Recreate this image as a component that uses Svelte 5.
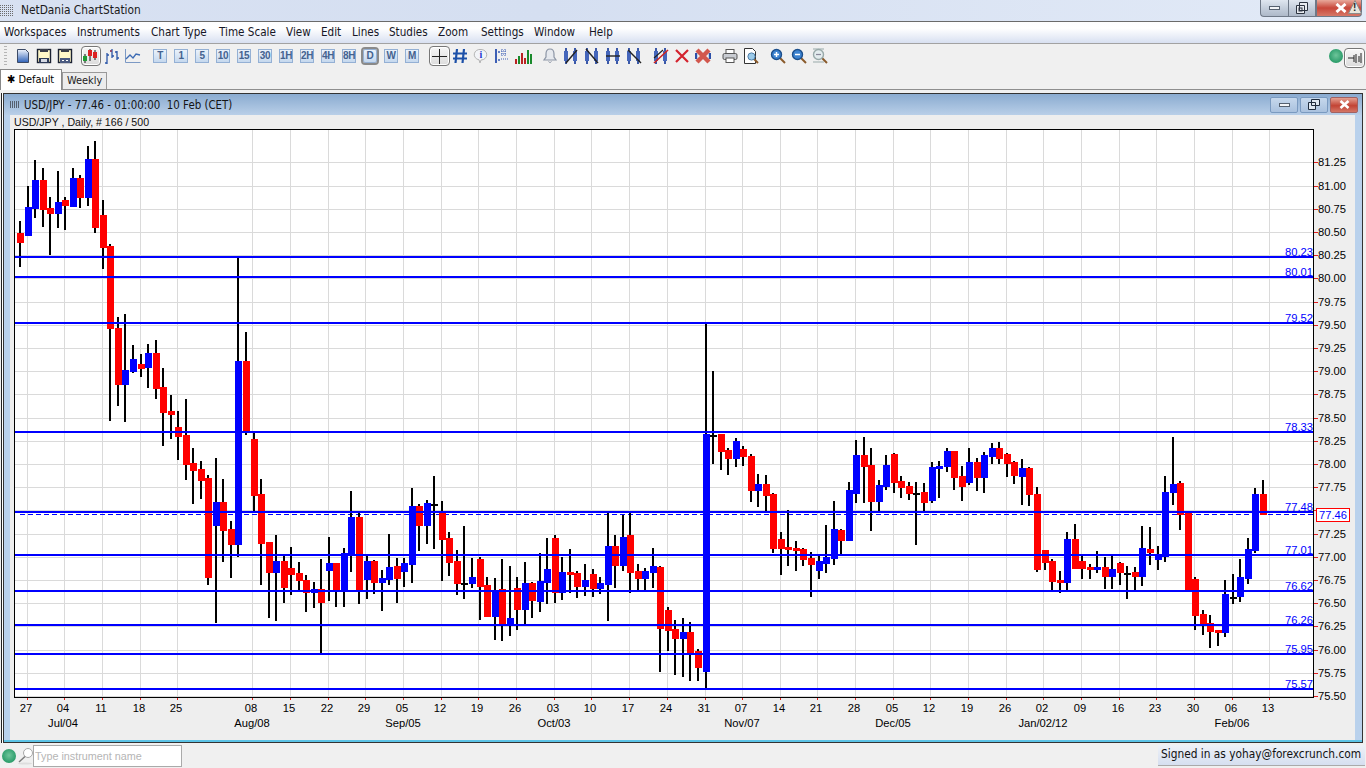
<script>
  const menu = [['Workspaces',4],['Instruments',77],['Chart Type',151],['Time Scale',219],['View',286],['Edit',321],['Lines',352],['Studies',389],['Zoom',438],['Settings',481],['Window',534],['Help',589]];
  const times = ['T','1','5','10','15','30','1H','2H','4H','8H','D','W','M'];
  // wick top, wick bottom, body top, body bottom, type (r red, b blue, d doji)
  const data = [
    [221,267,233,243,'r'],[186,236,207,236,'b'],[160,218,180,209,'b'],[168,227,180,210,'r'],[197,255,208,214,'r'],
    [171,228,202,214,'b'],[197,230,200,206,'r'],[168,207,178,207,'b'],[175,208,178,198,'r'],[146,206,159,198,'b'],
    [141,233,159,228,'r'],[200,269,215,248,'r'],[244,421,246,329,'r'],[317,406,328,385,'r'],[314,422,370,385,'b'],
    [345,373,359,372,'b'],[354,377,364,369,'r'],[344,388,353,368,'b'],[340,399,353,389,'r'],[368,446,387,413,'r'],
    [395,439,411,415,'r'],[411,460,427,437,'r'],[399,480,435,465,'r'],[448,504,463,471,'r'],[461,499,469,481,'r'],
    [475,585,478,578,'r'],[458,623,502,526,'b'],[479,562,502,531,'r'],[521,578,529,545,'r'],[257,557,361,545,'b'],
    [332,435,361,432,'r'],[432,511,439,496,'r'],[479,585,494,544,'r'],[542,618,542,573,'r'],[535,621,561,573,'b'],
    [556,603,561,588,'r'],[547,595,568,575,'r'],[562,591,573,581,'r'],[575,612,580,593,'r'],[582,608,589,593,'b'],
    [559,653,589,603,'r'],[537,601,563,571,'b'],[563,607,563,591,'r'],[548,607,553,591,'b'],[491,572,517,555,'b'],
    [513,604,517,590,'r'],[556,599,561,580,'b'],[560,594,561,583,'r'],[570,611,578,583,'b'],[534,585,567,580,'b'],
    [558,603,566,579,'r'],[558,587,563,572,'b'],[488,583,506,565,'b'],[504,551,506,526,'r'],[500,544,503,526,'b'],
    [476,549,504,504,'d'],[501,581,512,540,'r'],[532,576,538,563,'r'],[550,595,561,584,'r'],[526,599,583,583,'d'],
    [558,588,577,584,'b'],[557,620,559,587,'r'],[577,617,585,617,'r'],[578,640,590,617,'b'],[559,641,589,624,'r'],
    [566,636,618,625,'b'],[577,630,588,610,'r'],[562,625,583,610,'b'],[582,618,583,601,'r'],[553,612,581,602,'b'],
    [538,604,569,583,'b'],[535,603,538,593,'r'],[557,600,572,593,'b'],[549,593,572,575,'r'],[571,598,573,587,'r'],
    [564,596,580,587,'b'],[569,597,574,589,'r'],[577,594,583,589,'b'],[513,621,546,585,'b'],[535,588,546,566,'r'],
    [515,571,537,566,'b'],[513,593,535,573,'r'],[564,590,571,579,'r'],[568,590,571,579,'b'],[548,588,566,573,'b'],
    [566,672,567,629,'r'],[607,651,610,631,'r'],[620,675,629,639,'r'],[618,677,632,639,'b'],[622,681,632,653,'r'],
    [649,681,651,668,'r'],[324,688,434,672,'b'],
    [371,464,435,435,'d'],[434,470,434,452,'r'],[448,475,450,459,'r'],[438,467,441,459,'b'],[446,466,449,457,'r'],
    [454,502,456,491,'r'],[474,507,484,491,'b'],[475,511,484,496,'r'],[493,553,494,549,'r'],[532,575,539,549,'r'],
    [510,566,547,550,'r'],[541,571,548,551,'r'],[548,566,549,560,'r'],[552,597,558,565,'r'],[555,579,561,571,'b'],
    [525,573,557,564,'b'],[501,565,529,559,'b'],[529,554,530,541,'r'],[482,541,490,541,'b'],[440,503,455,494,'b'],
    [437,503,455,467,'r'],[448,531,465,502,'r'],[480,511,485,502,'b'],[455,490,465,487,'b'],[453,493,454,483,'r'],
    [476,498,481,488,'r'],[482,500,486,494,'r'],[482,545,493,493,'d'],[483,511,492,503,'r'],[462,503,467,501,'b'],
    [461,498,466,469,'b'],[448,472,451,467,'b'],[451,490,451,478,'r'],[466,501,476,487,'r'],[448,485,462,483,'b'],
    [458,491,462,478,'r'],[452,493,455,478,'b'],[443,464,448,457,'b'],[442,464,448,459,'r'],[453,477,454,464,'r'],
    [461,484,462,476,'r'],
    [459,505,468,477,'b'],[467,506,468,495,'r'],[487,572,494,570,'r'],[550,570,550,563,'r'],[559,590,561,582,'r'],
    [571,593,580,583,'r'],[532,590,539,583,'b'],[524,569,539,569,'r'],[556,579,561,569,'r'],[564,579,567,570,'r'],
    [551,573,567,570,'b'],[557,589,567,577,'r'],[556,589,569,577,'b'],[562,585,563,573,'r'],[566,599,573,573,'d'],
    [567,590,572,577,'r'],[526,586,548,577,'b'],[527,565,549,553,'r'],[546,570,554,560,'b'],[476,562,492,557,'b'],
    [437,505,484,493,'b'],[481,530,483,515,'r'],[513,590,513,590,'r'],[577,630,579,616,'r'],[610,635,614,624,'r'],
    [615,648,623,632,'r'],[630,646,630,633,'r'],[580,637,594,633,'b'],[574,604,597,597,'d'],[559,602,577,597,'b'],
    [538,584,549,579,'b'],[488,553,494,551,'b'],[480,515,494,515,'r']
  ];
  const candles = data.map((d, i) => {
    const x = Math.round(17 + 7.5333 * i);
    return { x, wt: d[0], wb: d[1], bt: d[2], bb: d[3], t: d[4] };
  });
  const gridX = [27,64,102,140,177,252,290,328,365,403,441,478,516,554,591,629,667,705,742,780,817,855,893,930,968,1006,1043,1081,1119,1156,1194,1232,1269];
  const dates = ['27','04','11','18','25','08','15','22','29','05','12','19','26','03','10','17','24','31','07','14','21','28','05','12','19','26','02','09','16','23','30','06','13'];
  const months = [['Jul/04',63],['Aug/08',252],['Sep/05',403],['Oct/03',554],['Nov/07',742],['Dec/05',893],['Jan/02/12',1043],['Feb/06',1232]];
  const prices = Array.from({ length: 24 }, (_, k) => {
    const v = 81.25 - 0.25 * k;
    return { y: Math.round(162.3 + 23.2 * k), label: v.toFixed(2), v };
  });
  const lines = [[257,'80.23'],[277,'80.01'],[323,'79.52'],[432,'78.33'],[512,'77.48'],[555,'77.01'],[591,'76.62'],[625,'76.26'],[654,'75.95'],[689,'75.57']];
  const trendIcons = [[3,15,14,2],[2,1,14,15],[1,8,15,8],[2,2,15,15]];
</script>

{#snippet bars()}
  <rect x="2" y="0" width="2" height="16" fill="#3a58a8" />
  <rect x="1" y="3" width="4" height="10" fill="#4566bb" />
  <rect x="11" y="0" width="2" height="16" fill="#3a58a8" />
  <rect x="10" y="3" width="4" height="10" fill="#4566bb" />
{/snippet}

{#snippet lens(sign, colour)}
  <line x1="10" y1="10" x2="15" y2="15" stroke="#8a5a2b" stroke-width="2" />
  <circle cx="6.5" cy="6.5" r="5" fill={colour} stroke={sign === 'f' ? '#9aa' : '#1c4f8c'} stroke-width="1.4" />
  {#if sign === '+'}
    <path d="M4 6.5h5M6.5 4v5" stroke="#fff" stroke-width="1.5" fill="none" />
  {:else if sign === '-'}
    <path d="M4 6.5h5" stroke="#fff" stroke-width="1.5" fill="none" />
  {:else}
    <path d="M1 1h11M1 14h11" stroke="#9aa" stroke-width="1" fill="none" />
    <path d="M4 6.5h5" stroke="#889" stroke-width="1.2" fill="none" />
  {/if}
{/snippet}

<div class="app">
  <header class="title">
    <svg class="grip-title" width="16" height="12" viewBox="0 0 16 12">
      <pattern id="dots" width="2" height="2" patternUnits="userSpaceOnUse"><rect width="1" height="1" fill="#6b6b6b" /></pattern>
      <rect width="14" height="12" fill="url(#dots)" />
    </svg>
    <span class="title-text">NetDania ChartStation</span>
    <div class="wbtns">
      <button class="wb min"><i class="dash"></i></button>
      <button class="wb res">
        <svg width="12" height="12" viewBox="0 0 12 12"><path d="M3.5.5h8v8h-8zM.5 3.5h8v8h-8z" fill="#e8ebf0" stroke="#2b3340" /><rect x="3" y="6" width="3" height="3" fill="none" stroke="#2b3340" /></svg>
      </button>
      <button class="wb close">
        <svg width="12" height="10" viewBox="0 0 12 10"><path d="M1.5 1l9 8M10.5 1l-9 8" stroke="#fff" stroke-width="3" /></svg>
      </button>
      <span class="warn"><svg width="14" height="14" viewBox="0 0 14 14"><path d="M7 .5L13.5 13.5H.5z" fill="#e9e6dc" stroke="#8c8c8c" /></svg><b>!</b></span>
    </div>
  </header>

  <nav class="menu">
    {#each menu as m}<span class="mi" style="left:{m[1]}px">{m[0]}</span>{/each}
  </nav>

  <div class="toolbar">
    <span class="grip"></span>
    <div class="g g1">
      <svg class="ic" viewBox="0 0 16 16"><defs><linearGradient id="doc" x1="0" y1="0" x2="0" y2="1"><stop offset="0" stop-color="#eef3fb" /><stop offset="1" stop-color="#2f62b8" /></linearGradient></defs><path d="M2.5 1.5h8l3 3v10h-11z" fill="url(#doc)" stroke="#3b4a66" /></svg>
      <svg class="ic" viewBox="0 0 16 16"><rect x="1.5" y="1.5" width="13" height="13" fill="#fff8c8" stroke="#1b2233" stroke-width="1.4" /><rect x="4" y="1" width="8" height="3" fill="#3b3f4a" /><rect x="3" y="10" width="10" height="5" fill="#2d3a58" /><rect x="5" y="11" width="6" height="3" fill="#d5d9e3" /></svg>
      <svg class="ic" viewBox="0 0 16 16"><rect x="1.5" y="1.5" width="13" height="13" fill="#fff8c8" stroke="#1b2233" stroke-width="1.4" /><rect x="4" y="1" width="8" height="3" fill="#3b3f4a" /><rect x="3" y="10" width="10" height="5" fill="#4a5a80" /><path d="M5 12.5h2M9 12.5h2" stroke="#fff" /></svg>
    </div>
    <div class="g g2">
      <span class="sel candle">
        <svg width="18" height="16" viewBox="0 0 18 16">
          <path d="M3 6v9M8 1v12M13 2v10" stroke="#111" />
          <rect x="1" y="8" width="4" height="5" fill="#1f9b35" />
          <rect x="6" y="2" width="4" height="6" fill="#d22" />
          <rect x="11" y="4" width="4" height="6" fill="#d22" />
        </svg>
      </span>
      <svg class="ic" viewBox="0 0 16 16"><path d="M3 5v11M1 15h2M3 7h2M8 1v9M6 3h2M8 8h2M13 3v9M11 4h2M13 10h2" stroke="#2a55a8" stroke-width="1.3" fill="none" /><path d="M6 3h2" stroke="#c33" /></svg>
      <svg class="ic" viewBox="0 0 16 16"><path d="M.5 1v13.5h15" stroke="#7c99c4" fill="none" /><path d="M1 11l4-4 3 3 3-4 4 1" stroke="#3e6cb4" stroke-width="1.3" fill="none" /></svg>
    </div>
    <div class="g g3">
      {#each times as t}<span class="tb" class:on={t === 'D'}>{t}</span>{/each}
    </div>
    <div class="g g4">
      <span class="sel cross"><svg width="15" height="15" viewBox="0 0 15 15"><path d="M0 7.5h15M7.5 0v15" stroke="#222" /></svg></span>
      <svg class="ic" viewBox="0 0 16 16"><path d="M5 1L3.5 15M12 1l-1.5 14M1 5.5h14M1 10.5h14" stroke="#1c50a8" stroke-width="2.2" fill="none" /></svg>
    </div>
    <div class="g g5">
      <svg class="ic" viewBox="0 0 16 16"><path d="M8 1.5a5.5 5 0 0 1 0 10.5l-1 3-1-3.2A5.5 5 0 0 1 8 1.5z" fill="#f2f4f8" stroke="#b4b4b4" /><text x="8" y="10" class="itxt">i</text></svg>
      <svg class="ic" viewBox="0 0 16 16"><rect x="1" y="1" width="2" height="14" fill="#3d5fb5" /><path d="M4 12h2M4 4h2" stroke="#3d5fb5" stroke-width="1.5" /><path d="M8 1v7M11 1v7M7 3h6M7 6h6M7 11h8" stroke="#3d5fb5" stroke-dasharray="1 1" /></svg>
      <svg class="ic wide" viewBox="0 0 18 16">
        <rect x="0" y="11" width="2" height="5" fill="#b22" /><rect x="3" y="8" width="2" height="8" fill="#1a8a2c" /><rect x="6" y="5" width="2" height="11" fill="#b22" /><rect x="9" y="10" width="2" height="6" fill="#b22" /><rect x="12" y="2" width="2" height="14" fill="#1a8a2c" /><rect x="15" y="6" width="2" height="10" fill="#1a8a2c" />
      </svg>
    </div>
    <div class="g g6">
      <svg class="ic" viewBox="0 0 16 16"><path d="M8 1c3 0 4 2 4 5v3l2 3H2l2-3V6c0-3 1-5 4-5z" fill="#e6e9ee" stroke="#8c95a5" stroke-width="1.2" /><path d="M6.5 13.5a1.7 1.7 0 0 0 3 0" fill="none" stroke="#8c95a5" /></svg>
    </div>
    <div class="g g7">
      {#each trendIcons as l}
        <svg class="ic" viewBox="0 0 16 16">
          {@render bars()}
          <line x1={l[0]} y1={l[1]} x2={l[2]} y2={l[3]} stroke="#222" stroke-width="1.4" />
        </svg>
      {/each}
    </div>
    <div class="g g8">
      <svg class="ic" viewBox="0 0 16 16">{@render bars()}<line x1="1" y1="15" x2="15" y2="2" stroke="#c22" stroke-width="1.6" /><line x1="1" y1="10" x2="10" y2="2" stroke="#222" stroke-width="1.2" /></svg>
      <svg class="ic" viewBox="0 0 16 16"><path d="M2 2l12 12M14 2L2 14" stroke="#d4232e" stroke-width="2.2" /></svg>
      <svg class="ic" viewBox="0 0 16 16"><path d="M2 2l12 12M14 2L2 14" stroke="#d2574d" stroke-width="4.4" /><path d="M1 5v6M15 5v6" stroke="#2d50a8" stroke-width="2.4" /></svg>
    </div>
    <div class="g g9">
      <svg class="ic" viewBox="0 0 16 16"><rect x="4" y="1.5" width="8" height="4" fill="#fff" stroke="#555" /><rect x="1" y="5.5" width="14" height="6" rx="1.5" fill="#c9ccd2" stroke="#555" /><rect x="4" y="10" width="8" height="4.5" fill="#fff" stroke="#555" /></svg>
      <svg class="ic" viewBox="0 0 16 16"><path d="M1.5 .5h8l3 3v12h-11z" fill="#fff" stroke="#333" /><line x1="10" y1="10" x2="15" y2="15" stroke="#8a5a2b" stroke-width="2" /><circle cx="8.5" cy="8.5" r="3.6" fill="#9ccbea" stroke="#4d7da8" /></svg>
    </div>
    <div class="g g10">
      <svg class="ic" viewBox="0 0 16 16">{@render lens('+', '#3d83d0')}</svg>
      <svg class="ic" viewBox="0 0 16 16">{@render lens('-', '#3d83d0')}</svg>
      <svg class="ic" viewBox="0 0 16 16">{@render lens('f', '#e3ecee')}</svg>
    </div>
    <div class="tool-right">
      <span class="led"></span>
      <span class="sel pin"><svg width="14" height="14" viewBox="0 0 14 14"><path d="M0 7h6M8 3v9M11 5v6M6 4v7M13 2v10" stroke="#222" fill="none" /></svg></span>
    </div>
  </div>

  <div class="tabs">
    <span class="tab active"><span class="star">✱</span> Default</span>
    <span class="tab">Weekly</span>
  </div>

  <section class="win">
    <div class="win-head">
      <span class="win-grip"></span>
      <span class="win-title">USD/JPY - 77.46 - 01:00:00 &nbsp;10 Feb (CET)</span>
      <div class="win-btns">
        <button class="ib"><i class="dash"></i></button>
        <button class="ib">
          <svg width="12" height="11" viewBox="0 0 12 11"><path d="M3.5.5h8v6h-8zM.5 3.5h7v7h-7z" fill="#dfe8f2" stroke="#1f2c3d" /></svg>
        </button>
        <button class="ib red">
          <svg width="11" height="9" viewBox="0 0 11 9"><path d="M1.5 1l8 7M9.5 1l-8 7" stroke="#fff" stroke-width="2.6" /></svg>
        </button>
      </div>
    </div>
    <div class="win-body">
      <div class="strip left"></div>
      <div class="chart">
        <div class="cap">USD/JPY , Daily, # 166 / 500</div>
        <svg class="plot" width="1341" height="609" viewBox="14 129 1341 609" shape-rendering="crispEdges">
          <rect class="bg" x="15" y="130" width="1298" height="567" />
          {#each gridX as x}<rect class="gr" x={x} y="130" width="1" height="567" />{/each}
          {#each prices as p}<rect class="gr" x="15" y={p.y} width="1298" height="1" />{/each}
          <line class="dash-line" x1="20" x2="1313" y1="514.5" y2="514.5" />
          {#each candles as c}
            <rect class="wick" x={c.x + 2} y={c.wt} width="2" height={c.wb - c.wt} />
            {#if c.t === 'd'}
              <rect class="wick" x={c.x} y={c.bt} width="7" height="2" />
            {:else}
              <rect class={c.t} x={c.x} y={c.bt} width="7" height={Math.max(c.bb - c.bt, 2)} />
            {/if}
          {/each}
          {#each lines as l}
            <rect class="b" x="15" y={l[0] - 1} width="1298" height="2" />
          {/each}
          <rect class="frame" x="14.5" y="129.5" width="1299" height="568" />
          {#each gridX as x}<rect class="tick" x={x} y="698" width="1" height="2" />{/each}
          {#each prices as p}
            <rect class="tick" x="1314" y={p.y} width="4" height="1" />
            {#if p.label !== '77.50'}
              <text class="ax" x="1318" y={p.y + 4}>{p.label}</text>
            {/if}
          {/each}
          {#each lines as l}
            <text class="lbl" x="1313" y={l[0] - 1}>{l[1]}</text>
          {/each}
          <rect class="curb" x="1316" y="508" width="34" height="14" />
          <rect class="bg" x="1317" y="509" width="32" height="12" />
          <text class="curt" x="1319" y="519">77.46</text>
          {#each gridX as x, i}
            <text class="dt" x={x - 1} y="712">{dates[i]}</text>
          {/each}
          {#each months as m}
            <text class="dt" x={m[1]} y="727">{m[0]}</text>
          {/each}
        </svg>
      </div>
      <div class="strip right"></div>
    </div>
  </section>

  <footer class="status">
    <span class="led low"></span>
    <svg class="find" width="16" height="18" viewBox="0 0 16 18"><circle cx="10" cy="6" r="4.5" fill="#fff" stroke="#a8a8a8" /><path d="M7 9.5L1 15" stroke="#7c7c7c" stroke-width="1.5" /><ellipse cx="7" cy="16.5" rx="7" ry="1" fill="#ddd" /></svg>
    <input class="inst" placeholder="Type instrument name" />
    <span class="signed">Signed in as yohay@forexcrunch.com</span>
  </footer>
</div>

<style>
  :global(body) { margin: 0; background: #f0f0f0; overflow: hidden; }
  .app { --ui: "DejaVu Sans Condensed", "Noto Sans", sans-serif; width: 1366px; height: 768px; display: flex; flex-direction: column; background: #f0f0f0; font-family: "Liberation Sans", Arial, sans-serif; color: #111; overflow: hidden; }

  .title { height: 21px; display: flex; align-items: center; position: relative; background: linear-gradient(90deg, #d8e1f2, #d5dff1 40%, #e2eaf7); flex: none; }
  .grip-title { margin-left: 0; margin-right: 5px; }
  .title-text { font-size: 11.8px; font-family: var(--ui); color: #1a1a1a; margin-top: -1px; }
  .wbtns { position: absolute; top: 0; left: 1260px; display: flex; height: 17px; }
  .wb { width: 28px; height: 17px; border: 1px solid #6f7988; border-top: 0; padding: 0; display: flex; align-items: center; justify-content: center; background: linear-gradient(#dfe6f0, #c2ccda 55%, #aeb9c9); }
  .wb.min { border-radius: 0 0 0 4px; border-right: 0; }
  .wb.close { width: 46px; border-radius: 0 0 4px 0; background: linear-gradient(#e8a99b, #c8473a 50%, #d67868); justify-content: flex-start; padding-left: 18px; }
  .dash { display: block; width: 11px; height: 4px; background: #f2f4f7; border: 1px solid #55606f; box-sizing: border-box; }
  .warn { position: absolute; right: 0; top: 0; width: 14px; height: 14px; }
  .warn svg { display: block; }
  .warn b { position: absolute; left: 5px; top: 2px; font-size: 10px; line-height: 12px; color: #222; }

  .menu { height: 21px; flex: none; position: relative; box-sizing: content-box; border-top: 1px solid #6a6a6a; border-bottom: 1px solid #a2a2a2; background: linear-gradient(#fdfdfe, #fff 30%, #d8e0f1); }
  .mi { position: absolute; top: 2px; font-size: 11.6px; font-family: var(--ui); line-height: 16px; color: #161626; white-space: nowrap; }

  .toolbar { height: 24px; flex: none; display: flex; align-items: center; padding-left: 4px; box-sizing: border-box; background: #f0f0f0; }
  .grip { width: 3px; height: 20px; margin-right: 8px; background: repeating-linear-gradient(#b5b5b5 0 1px, transparent 1px 3px); }
  .g { display: flex; align-items: center; gap: 5px; flex: none; }
  .g2 { margin-left: 8px; }
  .g3 { margin-left: 12px; gap: 7px; }
  .g4 { margin-left: 10px; gap: 2px; }
  .g5 { margin-left: 5px; }
  .g6, .g8, .g9, .g10 { margin-left: 11px; }
  .g7 { margin-left: 5px; }
  .ic { width: 16px; height: 16px; display: block; flex: none; }
  .ic.wide { width: 18px; margin-right: -2px; }
  .itxt { font: bold 10px "Liberation Serif", serif; text-anchor: middle; fill: #2338d0; }
  .sel { display: flex; align-items: center; justify-content: center; box-sizing: border-box; border: 1px solid #777; border-radius: 4px; background: linear-gradient(#f7f7f7, #dcdcdc); box-shadow: inset 0 0 0 1px #fff; flex: none; }
  .candle { width: 20px; height: 20px; margin-right: -2px; }
  .cross { width: 21px; height: 20px; }
  .pin { width: 21px; height: 20px; margin-top: 3px; }
  .tb { width: 14px; height: 14px; box-sizing: border-box; border: 1px solid #94b0d4; background: linear-gradient(#eaf2fb, #c5d8ee); color: #44628f; font: bold 10px/12px "Liberation Sans", sans-serif; text-align: center; letter-spacing: -0.4px; flex: none; }
  .tb.on { outline: 2px solid #8a8a8a; outline-offset: 0; border-radius: 2px; }
  .tool-right { margin-left: auto; padding-right: 1px; display: flex; align-items: center; }
  .led { width: 14px; height: 14px; border-radius: 50%; background: radial-gradient(circle at 50% 45%, #6ec59a, #3fa879 50%, #0e8d52); display: block; flex: none; margin-right: 1px; }

  .tabs { height: 21px; flex: none; display: flex; align-items: flex-end; border-bottom: 1px solid #8e8e8e; box-sizing: content-box; }
  .tab { font: 10.9px/16px var(--ui); height: 17px; box-sizing: border-box; border: 1px solid #999; border-bottom: 0; padding: 0 4px; background: #ececec; color: #222; }
  .tab.active { height: 21px; width: 62px; background: #fff; border-color: #888; padding: 2px 0 0 6px; margin-bottom: -1px; position: relative; color: #000; white-space: nowrap; }
  .star { font-size: 11px; }

  .win { flex: none; height: 648px; margin: 3px 3px 0 3px; border: 1px solid #333; box-shadow: -1px 0 0 #fff, -2px 0 0 #222; display: flex; flex-direction: column; }
  .win-head { height: 21px; flex: none; display: flex; align-items: center; background: linear-gradient(#8aabd0, #b9cfe8); position: relative; }
  .win-grip { width: 9px; height: 7px; margin-left: 6px; margin-right: 5px; background: repeating-linear-gradient(90deg, #55606f 0 1px, transparent 1px 2px); }
  .win-title { font: 11.4px var(--ui); color: #141414; white-space: pre; }
  .win-btns { margin-left: auto; margin-right: 4px; display: flex; gap: 2px; }
  .ib { width: 28px; height: 16px; padding: 0; box-sizing: border-box; border: 1px solid #7a9ac0; border-radius: 2px; display: flex; align-items: center; justify-content: center; background: linear-gradient(#c6d8ec, #a9c1de); }
  .ib.red { background: linear-gradient(#e5a192, #c24435 55%, #d47666); border-color: #a26262; }
  .win-body { flex: 1; display: flex; background: #eee; border-bottom: 2px solid #5cc3e6; min-height: 0; }
  .strip.left { width: 6px; background: #b9d1ec; flex: none; }
  .strip.right { width: 7px; background: #b9d1ec; flex: none; margin-left: auto; }
  .chart { width: 1345px; flex: none; display: flex; flex-direction: column; padding-left: 4px; box-sizing: border-box; }
  .cap { height: 14px; font-size: 10.6px; line-height: 14px; white-space: nowrap; }
  .plot { display: block; flex: none; }

  .bg { fill: #fff; }
  .gr { fill: #dadada; }
  .wick { fill: #000; }
  .r { fill: #ff0000; }
  .b { fill: #0000ff; }
  .frame { fill: none; stroke: #000; stroke-width: 1; }
  .tick { fill: #e02020; }
  .dash-line { stroke: #0000ff; stroke-width: 1; stroke-dasharray: 5 3; }
  .ax, .dt, .lbl, .curt { font-family: "Liberation Sans", Arial, sans-serif; font-size: 11.2px; }
  .ax { fill: #000; }
  .dt { fill: #000; text-anchor: middle; }
  .lbl { fill: #0000ff; text-anchor: end; }
  .curb { fill: #f00; }
  .curt { fill: #0000ff; }

  .status { flex: 1; display: flex; align-items: center; position: relative; background: #f0f0f0; padding-left: 2px; }
  .led.low { margin-right: 2px; }
  .find { flex: none; margin-right: -1px; }
  .inst { width: 149px; height: 22px; box-sizing: border-box; border: 1px solid #aaa; padding: 0 1px; font: 10.8px "Liberation Sans", sans-serif; background: #fff; outline: none; }
  .inst::placeholder { color: #b5b5b5; opacity: 1; }
  .signed { margin-left: auto; margin-right: 1px; width: 207px; height: 21px; box-sizing: border-box; padding-left: 3px; font: 11.8px/19px var(--ui); color: #111; white-space: nowrap; background: linear-gradient(#eef1f7, #d6dff0); border-bottom: 1px solid #aaa; }
</style>
